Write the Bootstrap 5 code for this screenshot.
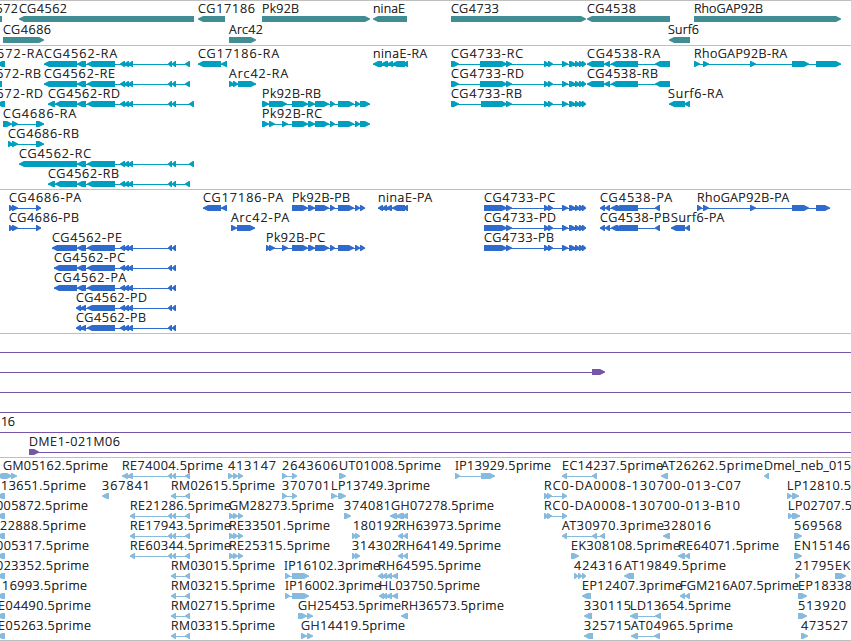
<!DOCTYPE html>
<html lang="en">
<head>
<meta charset="utf-8">
<meta name="viewport" content="width=device-width, initial-scale=1">
<title>Genome browser tracks</title>
<link href="https://cdn.jsdelivr.net/npm/bootstrap@5.3.0/dist/css/bootstrap.min.css" rel="stylesheet">
<style>
body { overflow: hidden; font-family: "Noto Sans", "Open Sans", sans-serif; }
.browser { width: 851px; height: 641px; border-bottom: 1px solid #bfbfbf; }
.track { border-top: 1px solid #bfbfbf; }
.track svg { display: block; width: 851px; }
.track text { font-size: 12.5px; font-weight: 300; fill: #000; stroke: #000; stroke-width: .22px; }
.genes { height: 45px; color: #408e94; }
.transcripts { height: 144px; color: #009ebf; }
.proteins { height: 144px; color: #2f6bcd; }
.clones { height: 124px; color: #7755a9; }
.ests { height: 183px; color: #87bbdd; }
</style>
<script src="https://cdn.jsdelivr.net/npm/bootstrap@5.3.0/dist/js/bootstrap.bundle.min.js"></script>
</head>
<body class="bg-white m-0">
<main class="browser d-flex flex-column overflow-hidden bg-white">
  <section class="track genes flex-shrink-0" aria-label="Genes"></section>
  <section class="track transcripts flex-shrink-0" aria-label="Transcripts"></section>
  <section class="track proteins flex-shrink-0" aria-label="Proteins"></section>
  <section class="track clones flex-shrink-0" aria-label="Clones"></section>
  <section class="track ests flex-shrink-0" aria-label="ESTs"></section>
</main>
<script>
// Feature: label | label start | label end | strand | exon ranges
const mid = '77-86 87-115 120-125 124-129 128-133 168-172 172-176';
const rc = '506-512 544-549 548-553 562-568 569-576 575-580 579-584 582-586';
const pk = '292-308 308-315 315-329 330-335 338-354 355-360';
const cut = '-3-5';
const rm = '171-176 185-190';
const re = '130-135 168-172 172-176 185-190';
const tri = '229-234 233-238 238-243';
const rho = '703-709 750-756 792-809 816-';
const data = {
  genes: [
    ['CG4572|-30|18|=|-20-2','CG4562|19|67|L|19-194','CG17186|198|255|L|198-225','Pk92B|262|299|R|262-370','ninaE|373|405|L|373-407','CG4733|451|499|R|451-586','CG4538|587|636|L|587-670','RhoGAP92B|694|763|R|694-841'],
    ['CG4686|3|51|R|3-44','Arc42|229|263|R|229-256','Surf6|668|699|L|669-690']
  ],
  transcripts: [
    ['CG4572-RA|-30|43|L|'+cut,'CG4562-RA|44|117|L|44-77 '+mid+' 185-190','CG17186-RA|198|279|L|198-221 221-227','ninaE-RA|373|427|L|373-382 381-388 387-393 392-405 403-408','CG4733-RC|451|523|R|451-459 480-507 '+rc,'CG4538-RA|587|660|L|587-604 604-610 611-638 655-670','RhoGAP92B-RA|694|787|R|694-700 '+rho+'841'],
    ['CG4572-RB|-30|41|=|-20-2','CG4562-RE|44|115|L|44-77 '+mid+' 185-190','Arc42-RA|229|288|R|229-234 233-238 238-256','CG4733-RD|451|524|R|451-459 480-507 '+rc,'CG4538-RB|587|658|L|587-604 604-610 611-638 655-670'],
    ['CG4572-RD|-30|43|L|'+cut,'CG4562-RD|48|120|L|48-55 55-77 '+mid+' 189-194','Pk92B-RB|262|321|R|262-269 269-287 '+pk+' 360-370','CG4733-RB|451|522|R|451-459 481-507 '+rc,'Surf6-RA|668|723|L|669-685 684-690'],
    ['CG4686-RA|3|76|R|3-12 12-18 36-44','Pk92B-RC|262|322|R|262-269 269-275 282-288 '+pk+' 360-370'],
    ['CG4686-RB|8|79|R|8-13 12-18 36-44'],
    ['CG4562-RC|19|91|L|19-77 '+mid+' 189-194'],
    ['CG4562-RB|48|119|L|48-55 55-77 '+mid+' 185-190']
  ],
  proteins: [
    ['CG4686-PA|9|81|R|9-13 12-18 36-41','CG17186-PA|203|283|L|203-221 221-227','Pk92B-PB|292|350|R|'+pk+' 360-365','ninaE-PA|378|432|L|378-383 382-387 386-392 392-405 403-408','CG4733-PC|484|555|R|484-507 '+rc,'CG4538-PA|600|672|L|600-605 605-610 611-618 615-638 655-660','RhoGAP92B-PA|697|789|R|697-702 '+rho+'830'],
    ['CG4686-PB|9|79|R|9-13 12-18 36-41','Arc42-PA|231|289|R|231-237 237-255','CG4733-PD|484|556|R|484-507 '+rc,'CG4538-PB|600|670|L|600-605 605-610 611-618 615-638 655-660','Surf6-PA|671|724|L|671-685 685-690'],
    ['CG4562-PE|52|122|L|52-77 '+mid,'Pk92B-PC|266|325|R|266-270 269-275 282-288 '+pk+' 360-365','CG4733-PB|484|554|R|484-507 '+rc],
    ['CG4562-PC|54|125|L|54-77 '+mid],
    ['CG4562-PA|54|126|L|54-77 '+mid],
    ['CG4562-PD|76|147|L|76-81 '+mid.replace('77','80')],
    ['CG4562-PB|76|146|L|76-81 '+mid.replace('77','80')]
  ],
  clones: [
    ['||||-9-860'],
    ['||||-9-592','|||R|592-605'],
    ['||||-9-860'],
    ['||||-9-860'],
    ['16|1|15||-9-860'],
    ['DME1-021M06|29|120|R|29-39','||||38-860']
  ],
  ests: [
    ['GM05162.5prime|3|108|R|3-12 11-17','|||L|-3-6','RE74004.5prime|122|223|L|122-128 127-133 168-172 172-176 185-190','413147|228|276|R|228-233 233-238 238-243','2643606|282|338|R|282-287 292-297','UT01008.5prime|339|441|R|339-346','IP13929.5prime|455|551|R|455-460 481-495','EC14237.5prime|562|663|L|562-567 592-597','AT26262.5prime|661|763|L|661-668','Dmel_neb_015|764|851|L|764-769'],
    ['13651.5prime|1|86|L|'+cut,'367841|102|150|L|102-109','RM02615.5prime|171|275|L|'+rm,'370701|282|330|R|282-287 292-297','LP13749.3prime|331|430|R|331-337 338-346','RC0-DA0008-130700-013-C07|544|741|R|544-548 547-552 562-567','LP12810.5|787|851|R|787-792 792-799'],
    ['005872.5prime|-4|88|L|'+cut,'RE21286.5prime|130|231|L|'+re,'GM28273.5prime|229|334|R|'+tri,'374081|344|391|R|344-351','GH07278.5prime|391|494|L|390-397 396-404 402-408','RC0-DA0008-130700-013-B10|544|740|R|544-548 547-552 562-567','LP02707.5|788|852|R|788-793 792-800'],
    ['22888.5prime|0|86|L|'+cut,'RE17943.5prime|130|231|L|'+re,'RE33501.5prime|229|330|R|'+tri,'180192|353|399|R|352-356 355-360','RH63973.5prime|398|501|L|398-403 403-408','AT30970.3prime|562|664|L|562-567 592-597 600-605','328016|663|711|L|663-670','569568|794|842|R|794-802'],
    ['005317.5prime|-4|89|L|'+cut,'RE60344.5prime|130|231|L|'+re,'RE25315.5prime|229|330|R|'+tri,'314302|352|399|R|352-356 355-360','RH64149.5prime|398|501|L|398-403 403-408','EK308108.5prime|571|680|R|571-579','RE64071.5prime|678|779|L|678-685 685-690','EN15146|794|850|R|794-802'],
    ['023352.5prime|-4|89|L|'+cut,'RM03015.5prime|171|275|L|'+rm,'IP16102.3prime|284|380|R|285-290 292-309','RH64595.5prime|378|481|L|378-383 382-387 386-392 392-398','424316|574|622|R|574-578 578-582 582-586','AT19849.5prime|624|726|L|624-634','21795|795|834|R|795-800','EK|835|850|R|835-846'],
    ['16993.5prime|2|87|L|'+cut,'RM03215.5prime|171|275|L|'+rm,'IP16002.3prime|285|381|R|285-290 292-309','HL03750.5prime|379|480|L|379-384 382-387 386-392 392-398','EP12407.3prime|582|682|L|582-591','FGM216A07.5prime|680|799|L|680-685 685-690','EP18338|798|852|R|798-807'],
    ['E04490.5prime|-2|91|L|'+cut,'RM02715.5prime|171|275|L|'+rm,'GH25453.5prime|298|401|R|298-307 307-313','RH36573.5prime|401|504|L|401-408','330115|584|631|L|584-592','LD13654.5prime|630|731|L|630-638 655-661','513920|798|846|R|798-807'],
    ['E05263.5prime|-2|91|L|'+cut,'RM03315.5prime|171|275|L|'+rm,'GH14419.5prime|301|405|R|301-307 307-313','325715|584|631|L|584-593','AT04965.5prime|631|733|L|631-638 654-660','473527|801|848|R|801-808']
  ]
};
// [first baseline, first glyph centre, row pitch, svg height]
const layout = {
  genes: [12, 18, 21, 44], transcripts: [12, 18, 20, 143], proteins: [12, 18, 20, 143],
  clones: [12, 18, 20, 123], ests: [12, 18, 20, 182]
};
function glyph(a, b, strand, y) {
  const t = y - 3, m = y, u = y + 3;
  if (strand === '=') return `M${a} ${t}H${b}V${u}H${a}Z`;
  const h = Math.min(b - a, 6);
  // stepped arrow head: one-pixel point, widening toward the body
  if (strand === 'R') return `M${a} ${t}H${b - h + 1}L${b} ${m - .6}V${m + .6}L${b - h + 1} ${u}H${a}Z`;
  return `M${b} ${t}H${a + h - 1}L${a} ${m - .6}V${m + .6}L${a + h - 1} ${u}H${b}Z`;
}
for (const [name, rows] of Object.entries(data)) {
  const [base, centre, pitch, height] = layout[name];
  let out = `<svg height="${height}" fill="currentColor">`;
  rows.forEach((row, i) => {
    const y = centre + i * pitch, by = base + i * pitch;
    for (const f of row) {
      const [label, x1, x2, strand, ranges] = f.split('|');
      const segs = ranges.split(' ').map(r => { const m = r.match(/^(-?\d+)-(\d+)$/); return [+m[1], +m[2]]; });
      const a = segs[0][0], b = segs[segs.length - 1][1];
      if (!strand || segs.length > 1) out += `<rect x="${a}" y="${y}" width="${b - a}" height="1"/>`;
      if (strand) out += `<path d="${segs.map(s => glyph(s[0], s[1], strand, y)).join('')}"/>`;
      if (label) out += `<text x="${x1}" y="${by}" textLength="${x2 - x1}">${label}</text>`;
    }
  });
  document.querySelector('.' + name).innerHTML = out + '</svg>';
}
</script>
</body>
</html>
